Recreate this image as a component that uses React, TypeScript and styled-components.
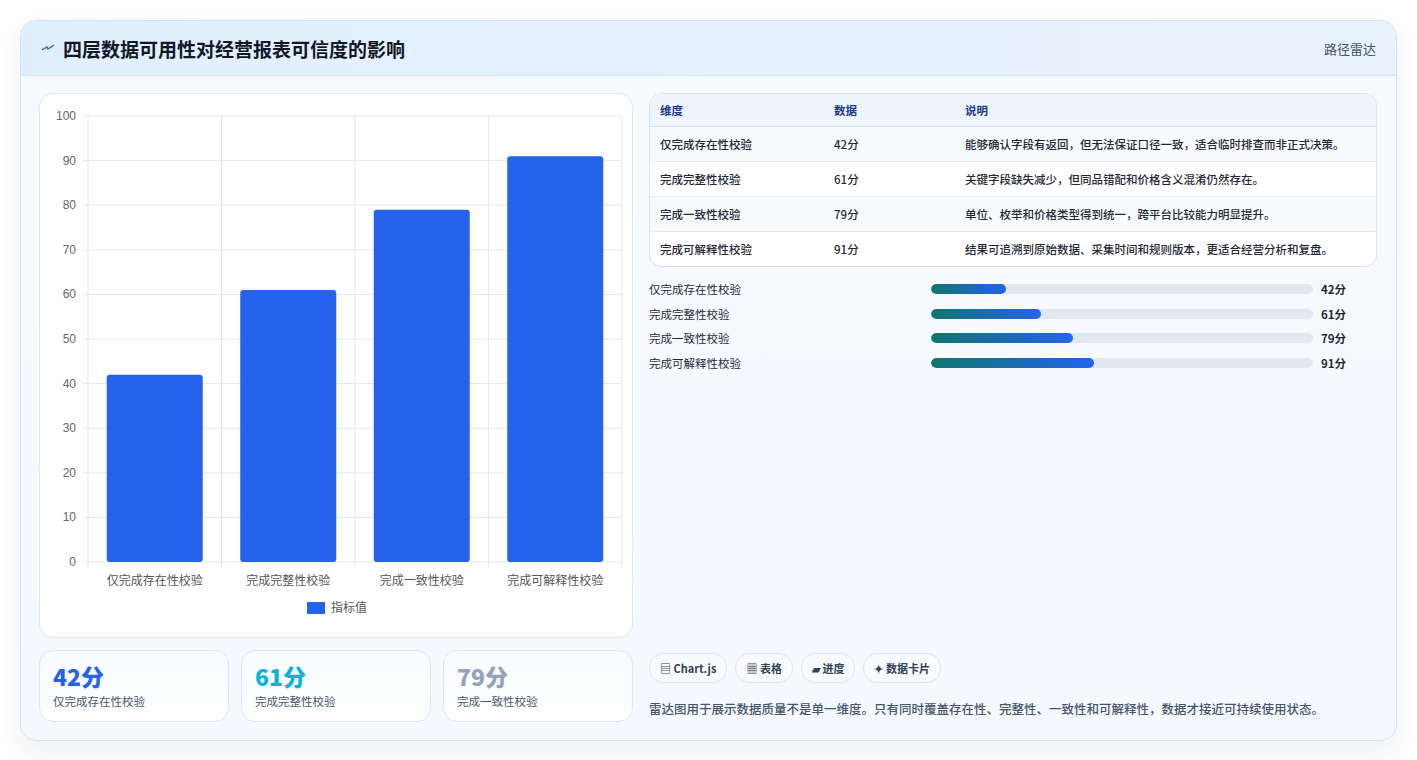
import styled, { createGlobalStyle } from "styled-components";

const Global = createGlobalStyle`
  body {
    margin: 0;
    background: #ffffff;
    font-family: "Noto Sans CJK SC", "Noto Sans", sans-serif;
    color: #1e293b;
  }
`;

const Page = styled.div`
  padding: 20px 20px 20px 20px;
  width: 1377px;
`;

const Card = styled.div`
  border: 1px solid #cfe4f5;
  border-radius: 16px;
  overflow: hidden;
  background: linear-gradient(180deg, #f7fbff 0%, #f5f9ff 100%);
  box-shadow: 0 10px 30px rgba(15, 40, 80, 0.08);
`;

const Header = styled.div`
  height: 54px;
  display: flex;
  align-items: center;
  justify-content: space-between;
  padding: 0 20px;
  background: linear-gradient(90deg, #e1effd, #e8f2fd);
  border-bottom: 1px solid #d4e6f6;
`;

const Title = styled.h1`
  margin: 0;
  font-size: 19px;
  font-weight: 700;
  color: #111827;
  display: flex;
  align-items: center;
  gap: 8px;
`;

const Tag = styled.span`
  font-size: 13px;
  color: #475569;
`;

const Body = styled.div`
  display: grid;
  grid-template-columns: 594px 728px;
  gap: 16px;
  padding: 17px 18px 18px 18px;
`;

const Col = styled.div`
  display: flex;
  flex-direction: column;
  gap: 12px;
`;

const ChartCard = styled.div`
  height: 543px;
  background: #fff;
  border: 1px solid #dbe6f2;
  border-radius: 14px;
`;

const Stats = styled.div`
  display: grid;
  grid-template-columns: repeat(3, 1fr);
  gap: 12px;
`;

const Stat = styled.div`
  height: 72px;
  border: 1px solid #dbe7f5;
  border-radius: 14px;
  background: linear-gradient(180deg, #f8fbff, #ffffff);
  padding: 10px 13px;
  box-sizing: border-box;
`;

const StatNum = styled.div<{ $c: string }>`
  font-size: 23px;
  font-weight: 800;
  color: ${(p) => p.$c};
  line-height: 30px;
`;

const StatLabel = styled.div`
  font-size: 11.5px;
  color: #475569;
  margin-top: 2px;
`;

const Table = styled.table`
  width: 100%;
  border-collapse: separate;
  border-spacing: 0;
  border: 1px solid #d6e2ee;
  border-radius: 12px;
  overflow: hidden;
  font-size: 11.5px;
  background: #fff;
  th {
    text-align: left;
    font-weight: 700;
    color: #1e3a8a;
    background: #eef5fe;
    height: 32px;
    padding: 0 10px;
    border-bottom: 1px solid #d6e2ee;
  }
  td {
    height: 34px;
    padding: 0 10px;
    color: #1f2937;
    font-weight: 500;
    border-bottom: 1px solid #e5edf5;
  }
  tr:nth-child(odd) td {
    background: #f7fbfd;
  }
  tr:last-child td {
    border-bottom: none;
  }
`;

const Bars = styled.div`
  display: flex;
  flex-direction: column;
  gap: 8px;
  margin-top: 2px;
`;

const BarRow = styled.div`
  display: grid;
  grid-template-columns: 274px 382px 1fr;
  gap: 8px;
  align-items: center;
  font-size: 11.5px;
  height: 16.5px;
`;

const Track = styled.div`
  height: 10px;
  border-radius: 5px;
  background: #e2e8f0;
  overflow: hidden;
`;

const Fill = styled.div`
  height: 100%;
  border-radius: 5px;
  background: linear-gradient(90deg, #0f766e, #2563eb);
`;

const Val = styled.span`
  font-weight: 700;
  color: #1f2937;
`;

const Spacer = styled.div`
  flex: 1;
`;

const Chips = styled.div`
  display: flex;
  gap: 8px;
`;

const Chip = styled.span`
  height: 28px;
  padding: 0 10px;
  border: 1px solid #dbe3ec;
  border-radius: 14px;
  background: #f8fafc;
  font-size: 11px;
  font-weight: 700;
  color: #334155;
  display: flex;
  align-items: center;
  gap: 4px;
`;

const Note = styled.p`
  margin: 4px 0 4px;
  font-size: 12.5px;
  color: #475569;
  font-weight: 500;
`;

const rows = [
  { name: "仅完成存在性校验", v: 42, d: "能够确认字段有返回，但无法保证口径一致，适合临时排查而非正式决策。" },
  { name: "完成完整性校验", v: 61, d: "关键字段缺失减少，但同品错配和价格含义混淆仍然存在。" },
  { name: "完成一致性校验", v: 79, d: "单位、枚举和价格类型得到统一，跨平台比较能力明显提升。" },
  { name: "完成可解释性校验", v: 91, d: "结果可追溯到原始数据、采集时间和规则版本，更适合经营分析和复盘。" },
];

function Chart() {
  const x0 = 48, x1 = 582, y0 = 468, y1 = 22;
  const h = (y0 - y1) / 100;
  const slot = (x1 - x0) / 4;
  return (
    <svg width="594" height="543" viewBox="0 0 594 543" style={{ display: "block" }}>
      {Array.from({ length: 11 }).map((_, i) => {
        const y = y0 - i * 10 * h;
        return (
          <g key={i}>
            <line x1={x0 - 5} x2={x1} y1={y} y2={y} stroke="#e5e7eb" />
            <text x={x0 - 12} y={y + 4} textAnchor="end" fontSize="12" fill="#666" fontFamily="Liberation Sans, sans-serif">{i * 10}</text>
          </g>
        );
      })}
      {[0, 1, 2, 3, 4].map((i) => (
        <line key={i} x1={x0 + i * slot} x2={x0 + i * slot} y1={y1} y2={y0 + 6} stroke="#e5e7eb" />
      ))}
      {rows.map((r, i) => {
        const cx = x0 + slot * (i + 0.5);
        return (
          <g key={r.name}>
            <rect x={cx - 48} y={y0 - r.v * h} width="96" height={r.v * h} rx="3" fill="#2563eb" />
            <text x={cx} y={y0 + 23} textAnchor="middle" fontSize="12" fill="#555" fontFamily="Noto Sans CJK SC, sans-serif">{r.name}</text>
          </g>
        );
      })}
      <rect x="267" y="508" width="18" height="12" fill="#2563eb" />
      <text x="291" y="518" fontSize="12" fill="#555" fontFamily="Noto Sans CJK SC, sans-serif">指标值</text>
    </svg>
  );
}

export default function App() {
  return (
    <Page>
      <Global />
      <Card>
        <Header>
          <Title>
            <svg width="14" height="10" viewBox="0 0 14 10">
              <path d="M1 7 L6 4 L7 6 L13 2" stroke="#2563eb" strokeWidth="1.4" fill="none" />
            </svg>
            四层数据可用性对经营报表可信度的影响
          </Title>
          <Tag>路径雷达</Tag>
        </Header>
        <Body>
          <Col>
            <ChartCard>
              <Chart />
            </ChartCard>
            <Stats>
              <Stat>
                <StatNum $c="#2563eb">42分</StatNum>
                <StatLabel>仅完成存在性校验</StatLabel>
              </Stat>
              <Stat>
                <StatNum $c="#06b6d4">61分</StatNum>
                <StatLabel>完成完整性校验</StatLabel>
              </Stat>
              <Stat>
                <StatNum $c="#94a3b8">79分</StatNum>
                <StatLabel>完成一致性校验</StatLabel>
              </Stat>
            </Stats>
          </Col>
          <Col>
            <Table>
              <thead>
                <tr>
                  <th style={{ width: 154 }}>维度</th>
                  <th style={{ width: 111 }}>数据</th>
                  <th>说明</th>
                </tr>
              </thead>
              <tbody>
                {rows.map((r) => (
                  <tr key={r.name}>
                    <td>{r.name}</td>
                    <td>{r.v}分</td>
                    <td>{r.d}</td>
                  </tr>
                ))}
              </tbody>
            </Table>
            <Bars>
              {rows.map((r) => (
                <BarRow key={r.name}>
                  <span>{r.name}</span>
                  <Track>
                    <Fill style={{ width: `${r.v * 0.47}%` }} />
                  </Track>
                  <Val>{r.v}分</Val>
                </BarRow>
              ))}
            </Bars>
            <Spacer />
            <Chips>
              <Chip>▤ Chart.js</Chip>
              <Chip>▦ 表格</Chip>
              <Chip>▰ 进度</Chip>
              <Chip>✦ 数据卡片</Chip>
            </Chips>
            <Note>雷达图用于展示数据质量不是单一维度。只有同时覆盖存在性、完整性、一致性和可解释性，数据才接近可持续使用状态。</Note>
          </Col>
        </Body>
      </Card>
    </Page>
  );
}
